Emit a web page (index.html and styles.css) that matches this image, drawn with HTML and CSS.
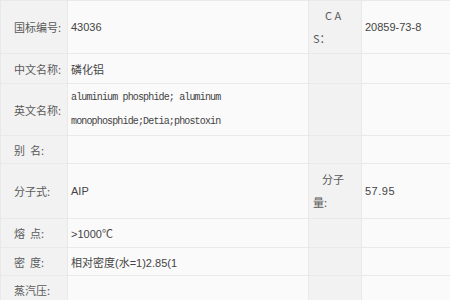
FILE: index.html
```html
<!DOCTYPE html>
<html lang="zh">
<head>
<meta charset="utf-8">
<link rel="stylesheet" href="styles.css">
</head>
<body>
<table class="info">
  <colgroup>
    <col class="c1"><col class="c2"><col class="c3"><col class="c4">
  </colgroup>
  <tr class="r1">
    <th>国标编号:</th><td class="num">43036</td>
    <th class="lab2"><span class="l1">C A</span><span class="l2">S：</span></th><td class="num">20859-73-8</td>
  </tr>
  <tr class="r2">
    <th>中文名称:</th><td>磷化铝</td><th class="lab2"></th><td></td>
  </tr>
  <tr class="r3">
    <th>英文名称:</th><td class="en"><span class="enl">aluminium phosphide; aluminum</span><span class="enl">monophosphide;Detia;phostoxin</span></td><th class="lab2"></th><td></td>
  </tr>
  <tr class="r4">
    <th>别&nbsp;&nbsp;名:</th><td></td><th class="lab2"></th><td></td>
  </tr>
  <tr class="r5">
    <th>分子式:</th><td class="num">AIP</td>
    <th class="lab2"><span class="l1">分子</span><span class="l2">量:</span></th><td class="num mw">57.95</td>
  </tr>
  <tr class="r6">
    <th>熔&nbsp;&nbsp;点:</th><td class="num">&gt;1000℃</td><th class="lab2"></th><td></td>
  </tr>
  <tr class="r7">
    <th>密&nbsp;&nbsp;度:</th><td class="num">相对密度(水=1)2.85(1</td><th class="lab2"></th><td></td>
  </tr>
  <tr class="r8">
    <th>蒸汽压:</th><td></td><th class="lab2"></th><td></td>
  </tr>
</table>
</body>
</html>
```
FILE: styles.css
```css
html, body {
  margin: 0;
  padding: 0;
  background: #fafafa;
  overflow: hidden;
}
.info {
  border-collapse: collapse;
  table-layout: fixed;
  width: 451px;
  font-family: "Noto Sans CJK SC", "Liberation Sans", sans-serif;
  font-size: 11px;
  color: #555;
}
.c1 { width: 67px; }
.c2 { width: 241px; }
.c3 { width: 53px; }
.c4 { width: 90px; }
.info th, .info td {
  border: 1px solid #e9e9e9;
  padding: 0;
  vertical-align: middle;
  text-align: left;
  font-weight: normal;
}
.info th {
  background: #f2f2f2;
  padding-left: 13px;
  color: #5a5a5a;
}
.info td {
  background: #fafafa;
  padding-left: 3px;
  color: #444;
}
.info th.lab2 {
  padding-left: 4px;
  padding-right: 8px;
}
.l1 {
  display: block;
  text-align: center;
  line-height: 23px;
}
.l2 {
  display: block;
  line-height: 23px;
}
.num {
  font-family: "Liberation Sans", "Noto Sans CJK SC", sans-serif;
}
.mw {
  padding-top: 6px;
  letter-spacing: 0.5px;
}
.info td.en {
  font-family: "Liberation Mono", "DejaVu Sans Mono", monospace;
  font-size: 10px;
  letter-spacing: -0.85px;
  line-height: 24px;
}
.enl {
  display: block;
  white-space: nowrap;
}
.r1 { height: 53px; }
.r2 { height: 30px; }
.r3 { height: 52px; }
.r4 { height: 28px; }
.r5 { height: 55px; }
.r6 { height: 29px; }
.r7 { height: 28px; }
.r8 { height: 28px; }
```
